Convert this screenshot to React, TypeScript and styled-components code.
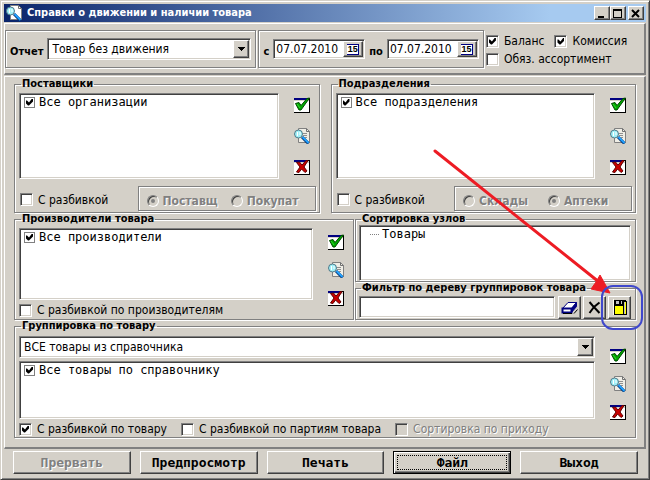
import React from 'react';
import styled, { createGlobalStyle, css } from 'styled-components';

const face = '#d4d0c8';
const shade = '#808080';
const dark = '#404040';
const sans = '"DejaVu Sans Condensed", "DejaVu Sans", sans-serif';
const mono = '"DejaVu Sans Mono", "Liberation Mono", monospace';

const GlobalStyle = createGlobalStyle`
  * { box-sizing: border-box; }
  body { margin: 0; background: ${face}; color: #000; font: 12px/14px ${sans}; }
  button, input, select { font: inherit; color: inherit; margin: 0; }
`;

const raised = css`
  border: 1px solid;
  border-color: #fff ${dark} ${dark} #fff;
  box-shadow: inset -1px -1px 0 ${shade};
`;
const sunken = css`
  border: 1px solid;
  border-color: ${shade} #fff #fff ${shade};
  box-shadow: inset 1px 1px 0 ${dark}, inset -1px -1px 0 ${face};
`;
const etched = css`
  border: 1px solid ${shade};
  box-shadow: inset 1px 1px 0 #fff, 1px 1px 0 #fff;
`;

const Window = styled.main`
  background: ${face};
  padding: 3px;
  border: 1px solid;
  border-color: ${face} ${dark} ${dark} ${face};
  box-shadow: inset 1px 1px 0 #fff, inset -1px -1px 0 ${shade};
`;
const TitleBar = styled.header`
  display: flex;
  align-items: center;
  height: 18px;
  padding: 0 2px;
  background: linear-gradient(to right, #0a246a, #a6caf0 85%);
  color: #fff;
`;
const Title = styled.h1`
  flex: 1;
  margin: 0 0 0 5px;
  font: bold 11px/16px ${sans};
`;
const TitleButton = styled.button<{ $apart?: boolean }>`
  ${raised}
  display: grid;
  place-items: center;
  width: 16px;
  height: 14px;
  padding: 0;
  margin-left: ${p => (p.$apart ? 2 : 0)}px;
  background: ${face};
`;
const Panel = styled.section`
  margin-top: 1px;
  border: 1px solid #fff;
  border-right: 2px solid ${shade};
  border-bottom: 2px solid ${shade};
`;
const Toolbar = styled(Panel)`
  display: flex;
  align-items: flex-start;
  gap: 2px;
  height: 52px;
  padding: 6px 0 0;
`;
const ToolGroup = styled.div`
  ${etched}
  display: flex;
  align-items: center;
  height: 38px;
  padding: 0 4px;
  gap: 4px;
`;
const BoldLabel = styled.label`
  font: bold 11px/14px ${sans};
  padding-top: 6px;
`;
const SelectBox = styled.span<{ $wide?: boolean }>`
  ${sunken}
  display: grid;
  grid-template-columns: 1fr 16px;
  align-items: center;
  width: ${p => (p.$wide ? '100%' : '204px')};
  height: 22px;
  padding: 1px;
  background: #fff;
`;
const Select = styled.select`
  grid-area: 1 / 1 / 2 / 3;
  appearance: none;
  width: 100%;
  height: 18px;
  padding: 0 3px;
  border: 0;
  background: transparent;
  outline: 0;
`;
const Arrow = styled.span`
  ${raised}
  grid-area: 1 / 2;
  display: grid;
  place-items: center;
  height: 18px;
  background: ${face};
  pointer-events: none;
`;
const DateBox = styled.span`
  ${sunken}
  display: flex;
  width: 92px;
  height: 20px;
  padding: 1px;
  background: #fff;
`;
const DateInput = styled.input`
  flex: 1;
  min-width: 0;
  padding: 0 0 0 1px;
  border: 0;
  background: transparent;
  outline: 0;
`;
const DateButton = styled.button`
  ${raised}
  display: grid;
  place-items: center;
  width: 20px;
  padding: 0;
  background: ${face};
`;
const DayBadge = styled.span`
  width: 12px;
  height: 11px;
  background: #fff;
  border: solid #000080;
  border-width: 1px 1px 1px 0;
  color: #000;
  font: bold 9px/9px "Liberation Sans", sans-serif;
  text-align: center;
`;
const Options = styled.div`
  display: grid;
  grid-template-columns: auto auto;
  column-gap: 10px;
  row-gap: 4px;
  padding-top: 4px;
`;
const Wide = styled.div`
  grid-column: 1 / 3;
`;

const CheckLabel = styled.label<{ $off?: boolean }>`
  display: flex;
  align-items: center;
  gap: 5px;
  height: 14px;
  white-space: nowrap;
  ${p => p.$off && css`color: ${shade}; text-shadow: 1px 1px 0 #fff;`}
`;
const Tick = styled.input`
  ${sunken}
  appearance: none;
  display: grid;
  place-items: center;
  flex: none;
  width: 13px;
  height: 13px;
  background: #fff;
  &:disabled { background: ${face}; }
  &:checked::before {
    content: '';
    width: 7px;
    height: 7px;
    background: #000;
    clip-path: polygon(0 2px, 1px 2px, 3px 4px, 6px 0, 7px 0, 7px 3px, 3px 7px, 2px 7px, 0 5px);
  }
`;
const ItemTick = styled(Tick)`
  width: 11px;
  height: 11px;
  border: 1px solid ${shade};
  box-shadow: none;
`;
const Radio = styled.input`
  appearance: none;
  display: grid;
  place-items: center;
  width: 12px;
  height: 12px;
  border: 1px solid;
  border-color: ${shade} #fff #fff ${shade};
  border-radius: 50%;
  box-shadow: inset 1px 1px 0 ${dark};
  &:checked::before {
    content: '';
    width: 4px;
    height: 4px;
    border-radius: 50%;
    background: ${shade};
  }
`;
const RadioLabel = styled.label`
  display: flex;
  align-items: center;
  gap: 4px;
  font: bold 12px/14px ${sans};
  color: ${shade};
  text-shadow: 1px 1px 0 #fff;
`;
const RadioGroup = styled.div<{ $gap: number }>`
  ${etched}
  display: flex;
  align-items: center;
  gap: ${p => p.$gap}px;
  width: 178px;
  height: 25px;
  padding: 4px 0 0 8px;
`;

const Body = styled(Panel)`
  display: grid;
  padding: 1px 8px 9px 9px;
`;
const TopRow = styled.div`
  display: grid;
  grid-template-columns: 1fr 1fr;
  gap: 11px;
`;
const MiddleRow = styled.div`
  display: grid;
  grid-template-columns: 340fr 281fr;
  gap: 1px;
`;
const Stack = styled.div`
  display: flex;
  flex-direction: column;
`;
const Group = styled.fieldset<{ $tight?: boolean }>`
  ${etched}
  display: block;
  min-width: 0;
  margin: 0;
  padding: ${p => (p.$tight ? '0 4px 0 3px' : '3px 3px 1px 4px')};
`;
const Legend = styled.legend`
  margin-left: 2px;
  padding: 0 1px;
  font: bold 11px/12px ${sans};
`;
const ListRow = styled.div<{ $icons: number }>`
  display: flex;
  padding-right: ${p => p.$icons}px;
`;
const ListBox = styled.div<{ $height: number }>`
  ${sunken}
  flex: 1;
  height: ${p => p.$height}px;
  padding: 2px 4px;
  background: #fff;
`;
const Grouping = styled.div`
  display: flex;
  flex: 1;
  flex-direction: column;
  gap: 3px;
  padding-top: 1px;
  & > div { flex: none; }
`;
const Item = styled.label`
  display: flex;
  align-items: center;
  gap: 4px;
  height: 12px;
  font: 12px/12px ${mono};
`;
const TreeItem = styled.div`
  display: flex;
  align-items: center;
  gap: 3px;
  height: 12px;
  padding-left: 6px;
  font: 12px/12px ${mono};
`;
const TreeLine = styled.span`
  width: 9px;
  border-top: 1px dotted ${shade};
`;
const IconColumn = styled.div<{ $gap: number; $top: number }>`
  display: flex;
  flex-direction: column;
  gap: ${p => p.$gap}px;
  margin: 0 0 -12px 15px;
  padding-top: ${p => p.$top}px;
`;
const IconButton = styled.button`
  width: 16px;
  height: 16px;
  padding: 0;
  border: 0;
  background: transparent;
  svg { display: block; }
`;
const Footer = styled.div`
  display: flex;
  align-items: center;
  justify-content: space-between;
  padding: 7px 0 0 1px;
  & > label { padding-top: 2px; }
`;
const CheckRow = styled.div`
  display: flex;
  gap: 14px;
  padding-top: 3px;
`;
const FilterRow = styled.div`
  display: flex;
  gap: 2px;
  padding-top: 2px;
`;
const FilterInput = styled.input`
  ${sunken}
  flex: 1;
  min-width: 0;
  height: 22px;
  margin-right: 1px;
  background: #fff;
  outline: 0;
`;
const ToolButton = styled.button`
  ${raised}
  position: relative;
  display: grid;
  place-items: center;
  width: 23px;
  height: 23px;
  padding: 0;
  background: ${face};
`;
const Callout = styled.svg`
  position: absolute;
  left: -180px;
  top: -152px;
  z-index: 1;
  pointer-events: none;
`;
const Actions = styled.footer`
  display: grid;
  grid-template-columns: repeat(5, 1fr);
  gap: 9px;
  padding: 2px 8px 2px 9px;
`;
const Action = styled.button<{ $primary?: boolean }>`
  ${raised}
  height: 23px;
  padding: 0;
  background: ${face};
  font: bold 13px/14px ${mono};
  &:disabled { color: ${shade}; text-shadow: 1px 1px 0 #fff; }
  ${p => p.$primary && css`
    border-color: #000;
    box-shadow: inset 1px 1px 0 #fff, inset -1px -1px 0 ${dark}, inset -2px -2px 0 ${shade};
    outline: 1px dotted #000;
    outline-offset: -5px;
  `}
`;

const CardBase = () => (
  <g shapeRendering="crispEdges">
    <path d="M0 1h16v15H0z" fill="#000" />
    <path d="M0 4h15v11H0z" fill="#fff" />
    <path d="M0 1h13v2H0z" fill="#000080" />
    <path d="M0 3h13v1H0zM13 2h2v2h-2z" fill={face} />
  </g>
);
const ApplyIcon = () => (
  <svg width="16" height="16" viewBox="0 0 16 16">
    <CardBase />
    <path d="M1.500 6.500L5 5.500 7 8.500 13 1.500 15.500 1 7 13H5z" fill="#00a800" stroke="#004800" />
    <path d="M3 7l3 4" stroke="#30d830" />
  </svg>
);
const ClearIcon = () => (
  <svg width="16" height="16" viewBox="0 0 16 16">
    <CardBase />
    <path d="M2.500 3.500L5.500 3 8 6 12 1.500 14 1.500 10 8 13 12 11 13.500 7.500 10 5 13.500 2.500 13 6 8z" fill="#c80000" stroke="#600000" />
  </svg>
);
const FindIcon = ({ bright }: { bright?: boolean }) => (
  <svg width="16" height="16" viewBox="0 0 16 16">
    <path d="M4.500 .5h8l3 3v11h-11z" fill={bright ? '#fff' : '#f0eee6'} stroke={shade} />
    <path d="M12.500 .5v3h3" fill="none" stroke="#707070" />
    {!bright && <path d="M9 5.500h4M9 7.500h4M11 9.500h2" stroke="#909090" />}
    <path d="M8 9l6.500 6.500" stroke="#003070" strokeWidth="3" />
    <path d="M8.500 9l6 6" stroke="#20a0ff" strokeWidth="2" />
    <circle cx="4.500" cy="6" r="4" fill="#a0f0f8" stroke="#507888" />
    <path d="M3.500 4v4M6 4v3" stroke="#fff" />
  </svg>
);
const EraserIcon = () => (
  <svg width="17" height="15" viewBox="0 0 17 15">
    <path d="M7 2.500h8.500L10.500 8.500H1.500z" fill="#fff" stroke="#000080" />
    <path d="M1.500 8.500h9v4h-9z" fill="#fff" stroke="#000080" strokeWidth="2" />
    <path d="M10.500 8.500l5-6v4l-5 6z" fill="#000080" stroke="#000080" />
    <path d="M2 13.500h9M13 13.500l3.500-4" stroke="#000" fill="none" />
  </svg>
);
const CrossIcon = () => (
  <svg width="13" height="13" viewBox="0 0 13 13">
    <path d="M1.500 1l3 3.500 7 7.500M11.500 1.500L6 6l-4.500 6" fill="none" stroke="#000" strokeWidth="2" />
  </svg>
);
const SaveIcon = () => (
  <svg width="16" height="17" viewBox="0 0 16 17" shapeRendering="crispEdges">
    <path d="M2 1h9l1 1v14H2z" fill="#000" />
    <path d="M4 2h6v3H4z" fill="#c0c0c0" />
    <path d="M7 2h2v3H7z" fill="#000" />
    <path d="M3 7h8v8H3z" fill="#ff0" />
    <path d="M1 0h1v16H1z" fill="#ffe" />
    <path d="M12 1h2v1h1v14h-3v-1h2V3h-2z" fill="#000" />
    <path d="M12 3h1v12h-1z" fill="#c0c0c0" />
    <path d="M13 3h1v12h-1z" fill="#ff0" />
  </svg>
);
const DownIcon = () => (
  <svg width="7" height="4" viewBox="0 0 7 4" shapeRendering="crispEdges">
    <path d="M0 0h7v1H6v1H5v1H4v1H3V3H2V2H1V1H0z" />
  </svg>
);

const Check = ({ text, checked, off }: { text: string; checked?: boolean; off?: boolean }) => (
  <CheckLabel $off={off}>
    <Tick type="checkbox" defaultChecked={checked} disabled={off} />
    {text}
  </CheckLabel>
);
const CheckedItem = ({ text }: { text: string }) => (
  <Item>
    <ItemTick type="checkbox" defaultChecked />
    {text}
  </Item>
);
const Icons = ({ gap, top }: { gap: number; top: number }) => (
  <IconColumn $gap={gap} $top={top}>
    <IconButton aria-label="Выбрать"><ApplyIcon /></IconButton>
    <IconButton aria-label="Найти"><FindIcon /></IconButton>
    <IconButton aria-label="Очистить"><ClearIcon /></IconButton>
  </IconColumn>
);
const Radios = ({ name, items, active, gap }: { name: string; items: string[]; active: number; gap: number }) => (
  <RadioGroup $gap={gap}>
    {items.map((t, i) => (
      <RadioLabel key={t}>
        <Radio type="radio" name={name} defaultChecked={i === active} disabled />
        {t}
      </RadioLabel>
    ))}
  </RadioGroup>
);
const DateField = ({ id }: { id: string }) => (
  <DateBox>
    <DateInput id={id} type="text" defaultValue="07.07.2010" />
    <DateButton aria-label="Календарь"><DayBadge>15</DayBadge></DateButton>
  </DateBox>
);

export default function App() {
  return (
    <>
      <GlobalStyle />
      <Window>
        <TitleBar>
          <FindIcon bright />
          <Title>Справки о движении и наличии товара</Title>
          <TitleButton aria-label="Свернуть">
            <svg width="10" height="9" viewBox="0 0 10 9"><path d="M1 7h6v2H1z" /></svg>
          </TitleButton>
          <TitleButton aria-label="Развернуть">
            <svg width="10" height="9" viewBox="0 0 10 9"><path d="M0 0h9v9H0zM1 2v6h7V2z" fillRule="evenodd" /></svg>
          </TitleButton>
          <TitleButton aria-label="Закрыть" $apart>
            <svg width="10" height="9" viewBox="0 0 10 9"><path d="M1 1l7 7M8 1L1 8" stroke="#000" strokeWidth="2" /></svg>
          </TitleButton>
        </TitleBar>

        <Toolbar>
          <ToolGroup>
            <BoldLabel htmlFor="report">Отчет</BoldLabel>
            <SelectBox>
              <Select id="report"><option>Товар без движения</option></Select>
              <Arrow><DownIcon /></Arrow>
            </SelectBox>
          </ToolGroup>
          <ToolGroup>
            <BoldLabel htmlFor="from">с</BoldLabel>
            <DateField id="from" />
            <BoldLabel htmlFor="to">по</BoldLabel>
            <DateField id="to" />
          </ToolGroup>
          <Options>
            <Check text="Баланс" checked />
            <Check text="Комиссия" checked />
            <Wide><Check text="Обяз. ассортимент" /></Wide>
          </Options>
        </Toolbar>

        <Body>
          <TopRow>
            <Group>
              <Legend>Поставщики</Legend>
              <ListRow $icons={6}>
                <ListBox $height={86}><CheckedItem text="Все организации" /></ListBox>
                <Icons gap={15} top={4} />
              </ListRow>
              <Footer>
                <Check text="С разбивкой" />
                <Radios name="partner" items={['Поставщ', 'Покупат']} active={0} gap={13} />
              </Footer>
            </Group>
            <Group>
              <Legend>Подразделения</Legend>
              <ListRow $icons={6}>
                <ListBox $height={86}><CheckedItem text="Все подразделения" /></ListBox>
                <Icons gap={15} top={4} />
              </ListRow>
              <Footer>
                <Check text="С разбивкой" />
                <Radios name="division" items={['Склады', 'Аптеки']} active={1} gap={20} />
              </Footer>
            </Group>
          </TopRow>

          <MiddleRow>
            <Group>
              <Legend>Производители товара</Legend>
              <ListRow $icons={6}>
                <ListBox $height={72}><CheckedItem text="Все производители" /></ListBox>
                <Icons gap={12} top={6} />
              </ListRow>
              <CheckRow><Check text="С разбивкой по производителям" /></CheckRow>
            </Group>
            <Stack>
              <Group $tight>
                <Legend>Сортировка узлов</Legend>
                <ListBox $height={56}>
                  <TreeItem><TreeLine />Товары</TreeItem>
                </ListBox>
              </Group>
              <Group $tight>
                <Legend>Фильтр по дереву группировок товара</Legend>
                <FilterRow>
                  <FilterInput type="text" aria-label="Фильтр по дереву группировок товара" />
                  <ToolButton aria-label="Стереть"><EraserIcon /></ToolButton>
                  <ToolButton aria-label="Удалить"><CrossIcon /></ToolButton>
                  <ToolButton aria-label="Сохранить">
                    <SaveIcon />
                    <Callout width="220" height="190" viewBox="0 0 220 190">
                      <path d="M6 6L170 137" stroke="#ed1c24" strokeWidth="3" fill="none" strokeLinecap="round" />
                      <path d="M181 148L162 144 167 137 171 130z" fill="#ed1c24" stroke="#ed1c24" />
                      <rect x="173" y="141" width="40" height="43" rx="11" fill="none" stroke="#3f48cc" strokeWidth="2" />
                    </Callout>
                  </ToolButton>
                </FilterRow>
              </Group>
            </Stack>
          </MiddleRow>

          <Group>
            <Legend>Группировка по товару</Legend>
            <ListRow $icons={6}>
              <Grouping>
                <SelectBox $wide>
                  <Select aria-label="Группировка по товару"><option>ВСЕ товары из справочника</option></Select>
                  <Arrow><DownIcon /></Arrow>
                </SelectBox>
                <ListBox $height={58}><CheckedItem text="Все товары по справочнику" /></ListBox>
              </Grouping>
              <Icons gap={12} top={13} />
            </ListRow>
            <CheckRow>
              <Check text="С разбивкой по товару" checked />
              <Check text="С разбивкой по партиям товара" />
              <Check text="Сортировка по приходу" off />
            </CheckRow>
          </Group>
        </Body>

        <Actions>
          <Action disabled>Прервать</Action>
          <Action>Предпросмотр</Action>
          <Action>Печать</Action>
          <Action $primary>Файл</Action>
          <Action>Выход</Action>
        </Actions>
      </Window>
    </>
  );
}
